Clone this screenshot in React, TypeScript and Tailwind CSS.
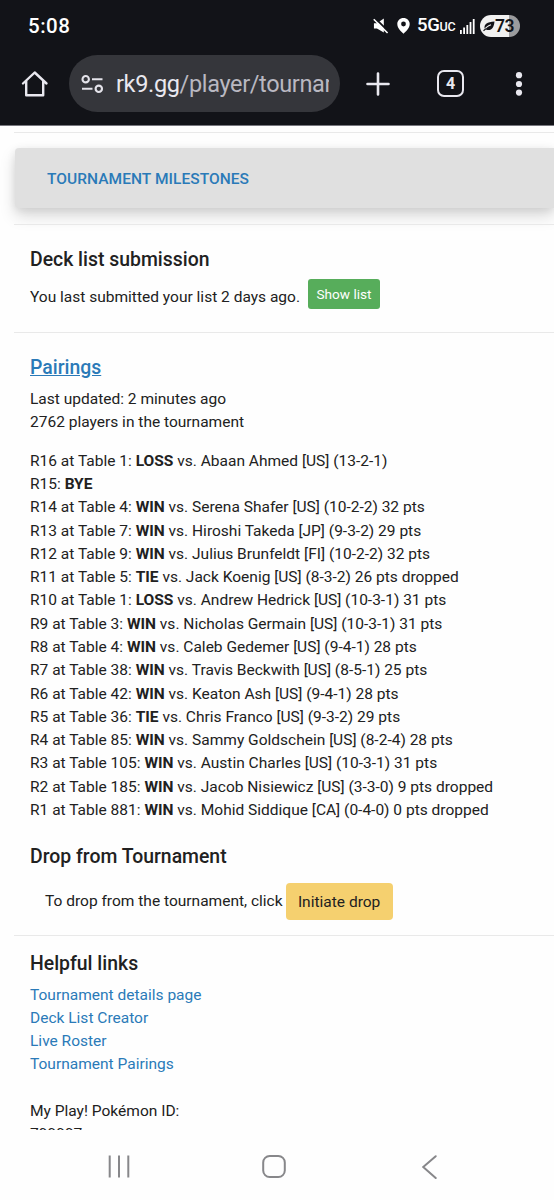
import React from 'react';

interface Round {
  label: string;
  result: string;
  rest?: string;
}

const rounds: Round[] = [
  { label: 'R16 at Table 1:', result: 'LOSS', rest: 'vs. Abaan Ahmed [US] (13-2-1)' },
  { label: 'R15:', result: 'BYE' },
  { label: 'R14 at Table 4:', result: 'WIN', rest: 'vs. Serena Shafer [US] (10-2-2) 32 pts' },
  { label: 'R13 at Table 7:', result: 'WIN', rest: 'vs. Hiroshi Takeda [JP] (9-3-2) 29 pts' },
  { label: 'R12 at Table 9:', result: 'WIN', rest: 'vs. Julius Brunfeldt [FI] (10-2-2) 32 pts' },
  { label: 'R11 at Table 5:', result: 'TIE', rest: 'vs. Jack Koenig [US] (8-3-2) 26 pts dropped' },
  { label: 'R10 at Table 1:', result: 'LOSS', rest: 'vs. Andrew Hedrick [US] (10-3-1) 31 pts' },
  { label: 'R9 at Table 3:', result: 'WIN', rest: 'vs. Nicholas Germain [US] (10-3-1) 31 pts' },
  { label: 'R8 at Table 4:', result: 'WIN', rest: 'vs. Caleb Gedemer [US] (9-4-1) 28 pts' },
  { label: 'R7 at Table 38:', result: 'WIN', rest: 'vs. Travis Beckwith [US] (8-5-1) 25 pts' },
  { label: 'R6 at Table 42:', result: 'WIN', rest: 'vs. Keaton Ash [US] (9-4-1) 28 pts' },
  { label: 'R5 at Table 36:', result: 'TIE', rest: 'vs. Chris Franco [US] (9-3-2) 29 pts' },
  { label: 'R4 at Table 85:', result: 'WIN', rest: 'vs. Sammy Goldschein [US] (8-2-4) 28 pts' },
  { label: 'R3 at Table 105:', result: 'WIN', rest: 'vs. Austin Charles [US] (10-3-1) 31 pts' },
  { label: 'R2 at Table 185:', result: 'WIN', rest: 'vs. Jacob Nisiewicz [US] (3-3-0) 9 pts dropped' },
  { label: 'R1 at Table 881:', result: 'WIN', rest: 'vs. Mohid Siddique [CA] (0-4-0) 0 pts dropped' },
];

const links = ['Tournament details page', 'Deck List Creator', 'Live Roster', 'Tournament Pairings'];

function StatusBar() {
  return (
    <div className="flex h-[52px] items-center pl-7 pr-[34px] text-white">
      <span className="text-[20.5px] font-medium leading-6 tracking-[0.5px]">5:08</span>
      {/* Muted speaker */}
      <svg className="ml-auto" width="16" height="16" viewBox="0 0 17 16" fill="none">
        <path d="M1 5.2h3.2L11.5 0v15L4.2 10.6H1z" fill="#fff" />
        <path d="M2 -0.5L17 14.5" stroke="#121318" strokeWidth="2" />
        <path d="M0.8 0.8L15.5 15.5" stroke="#fff" strokeWidth="1.7" />
      </svg>
      {/* Location pin */}
      <svg className="ml-2" width="13" height="16" viewBox="0 0 13 16" fill="#fff">
        <path
          fillRule="evenodd"
          d="M6.5 0C2.9 0 .3 2.7.3 6.1c0 4 3.6 7.5 6.2 9.7 2.6-2.2 6.2-5.7 6.2-9.7C12.7 2.7 10.1 0 6.5 0zm0 3.6a2.4 2.4 0 1 1 0 4.8 2.4 2.4 0 0 1 0-4.8z"
        />
      </svg>
      <span className="ml-[7px] w-[39px] whitespace-nowrap text-[18.5px] font-medium leading-6 tracking-[-0.3px]">
        5G<span className="text-[12.5px] tracking-[-0.3px]">UC</span>
      </span>
      <svg className="ml-1" width="15" height="15" viewBox="0 0 15 15" fill="#fff">
        <rect x="0" y="11" width="1.8" height="4" />
        <rect x="3.2" y="8.5" width="1.8" height="6.5" />
        <rect x="6.4" y="6" width="1.8" height="9" />
        <rect x="9.6" y="3" width="1.8" height="12" />
        <rect x="12.8" y="0" width="1.8" height="15" />
      </svg>
      {/* Battery */}
      <div className="ml-[5px] flex h-[22px] w-10 items-center rounded-full bg-[linear-gradient(to_right,#f1f1f1_73%,#9b9b9d_73%)] pl-[3px] text-[#121318]">
        <svg width="12" height="12" viewBox="0 0 12 12" fill="none">
          <path d="M1.5 8.5C1 4 4 2 11.5 1.5 11 7.5 8.5 11 3.5 9.8z" fill="#121318" />
          <path d="M0.5 11C2.5 7.5 5 5.8 8 4.8" stroke="#f1f1f1" strokeWidth="1.1" />
          <path d="M0.5 10.8L3 8.6" stroke="#121318" strokeWidth="1.2" />
        </svg>
        <span className="text-[17.5px] font-semibold leading-[22px] tracking-[-0.6px]">73</span>
      </div>
    </div>
  );
}

function AddressBar() {
  return (
    <div className="flex h-[73px] items-start pl-[21px] pr-[31px] pt-[3px]">
      <svg
        className="mt-[15px]"
        width="28"
        height="28"
        viewBox="0 0 28 28"
        fill="none"
        stroke="#e9e8ef"
        strokeWidth="2.4"
        strokeLinejoin="round"
        strokeLinecap="round"
      >
        <path d="M2 13.5L13.7 2.5 25.5 13.5M5.2 11v14.2h17V11" />
      </svg>
      <div className="ml-5 flex h-[57px] w-[271px] items-center rounded-full bg-[#35363b] pl-3">
        <svg width="23" height="20" viewBox="0 0 23 20" fill="none" stroke="#e4e3ea" strokeWidth="2.1">
          <circle cx="4.7" cy="5.2" r="3.2" />
          <path d="M11 5.2h10.5M1 14.8h10.5" />
          <circle cx="17.8" cy="14.8" r="3.2" />
        </svg>
        <div className="ml-3 w-[213px] overflow-hidden whitespace-nowrap text-[23.5px] leading-8 tracking-[-0.35px] text-[#b9b8c1]">
          <span className="text-[#e9e8ef]">rk9.gg</span>/player/tournam
        </div>
      </div>
      <svg
        className="ml-[26px] mt-[17px]"
        width="24"
        height="24"
        viewBox="0 0 24 24"
        stroke="#e9e8ef"
        strokeWidth="2.6"
        strokeLinecap="round"
      >
        <path d="M12 1.5v21M1.5 12h21" />
      </svg>
      <div className="ml-[47px] mt-[15px] flex h-[27px] w-[27px] items-center justify-center rounded-[7px] border-2 border-[#e9e8ef] text-[16px] font-bold leading-none text-[#e9e8ef]">
        4
      </div>
      <svg className="ml-auto mt-[17px]" width="8" height="24" viewBox="0 0 8 24" fill="#e9e8ef">
        <circle cx="4" cy="3.2" r="3.1" />
        <circle cx="4" cy="12" r="3.1" />
        <circle cx="4" cy="20.6" r="3.1" />
      </svg>
    </div>
  );
}

function Divider() {
  return <div className="ml-3.5 h-px bg-[#e9e9e9]" />;
}

function NavBar() {
  return (
    <div className="flex h-[70px] items-start pl-[108px] pt-[25px] text-[#87878a]">
      <svg width="22" height="23" viewBox="0 0 22 23" stroke="currentColor" strokeWidth="2">
        <path d="M1.7 0.5v22M11 0.5v22M20.3 0.5v22" />
      </svg>
      <svg
        className="ml-[132px]"
        width="24"
        height="23"
        viewBox="0 0 24 23"
        fill="none"
        stroke="currentColor"
        strokeWidth="2"
      >
        <rect x="1.2" y="1" width="21.6" height="21" rx="6.5" />
      </svg>
      <svg
        className="ml-[136px]"
        width="15"
        height="24"
        viewBox="0 0 15 24"
        fill="none"
        stroke="currentColor"
        strokeWidth="2"
        strokeLinecap="round"
      >
        <path d="M13.7 1.2L1.2 12l12.5 11" />
      </svg>
    </div>
  );
}

export default function App() {
  return (
    <div className="flex h-[1200px] w-[554px] flex-col overflow-hidden bg-[#fefefe] font-['Roboto',sans-serif] text-[15.52px] leading-[23.28px] text-[#212121]">
      <header className="h-[126px] shrink-0 border-b border-[#77777e] bg-[#121318]">
        <StatusBar />
        <AddressBar />
      </header>

      <main className="h-[1004px] shrink-0 overflow-hidden pt-1.5">
        <Divider />
        <div className="ml-[15px] mt-[15px] h-[60px] rounded-l-[4px] bg-[#e0e0e0] pl-8 pt-5 shadow-[0_8px_16px_rgba(0,0,0,0.15),0_2px_8px_rgba(0,0,0,0.08)]">
          <h2 className="font-medium tracking-[0.05px] text-[#2a7ab8]">TOURNAMENT MILESTONES</h2>
        </div>
        <div className="h-4" />
        <Divider />

        <section className="h-[107px] pl-[30px] pt-[22px]">
          <h3 className="text-[19.4px] font-medium leading-[25px]">Deck list submission</h3>
          <div className="mt-[7px] flex items-start">
            <p className="pt-[7px]">You last submitted your list 2 days ago.</p>
            <button className="ml-2 h-[30px] w-[72px] rounded-[3px] bg-[#57ad5b] text-[13.6px] leading-[30px] text-white">
              Show list
            </button>
          </div>
        </section>
        <Divider />

        <section className="h-[602px] pl-[30px] pt-[22px]">
          <h3 className="text-[19.4px] font-medium leading-[25px] text-[#2a7ab8] underline">Pairings</h3>
          <p className="mt-2">Last updated: 2 minutes ago</p>
          <p>2762 players in the tournament</p>
          <ul className="mt-[15.2px]">
            {rounds.map((round) => (
              <li key={round.label}>
                {round.label} <b className="font-bold">{round.result}</b> {round.rest}
              </li>
            ))}
          </ul>
          <h3 className="mt-[21.8px] text-[19.4px] font-medium leading-[25px]">Drop from Tournament</h3>
          <div className="mt-[14px] flex items-start pl-[15px]">
            <p className="pt-[6.5px]">To drop from the tournament, click</p>
            <button className="ml-[3px] h-[37px] w-[107px] rounded-[4px] bg-[#f5d06f] pt-px leading-[37px]">
              Initiate drop
            </button>
          </div>
        </section>
        <Divider />

        <section className="pl-[30px] pt-[15px]">
          <h3 className="text-[19.4px] font-medium leading-[25px]">Helpful links</h3>
          <nav className="mt-[7.5px] flex flex-col text-[#2a7ab8]">
            {links.map((link) => (
              <a key={link}>{link}</a>
            ))}
          </nav>
          <p className="mt-[23px]">My Play! Pokémon ID:</p>
          <p>799997</p>
        </section>
      </main>

      <NavBar />
    </div>
  );
}
